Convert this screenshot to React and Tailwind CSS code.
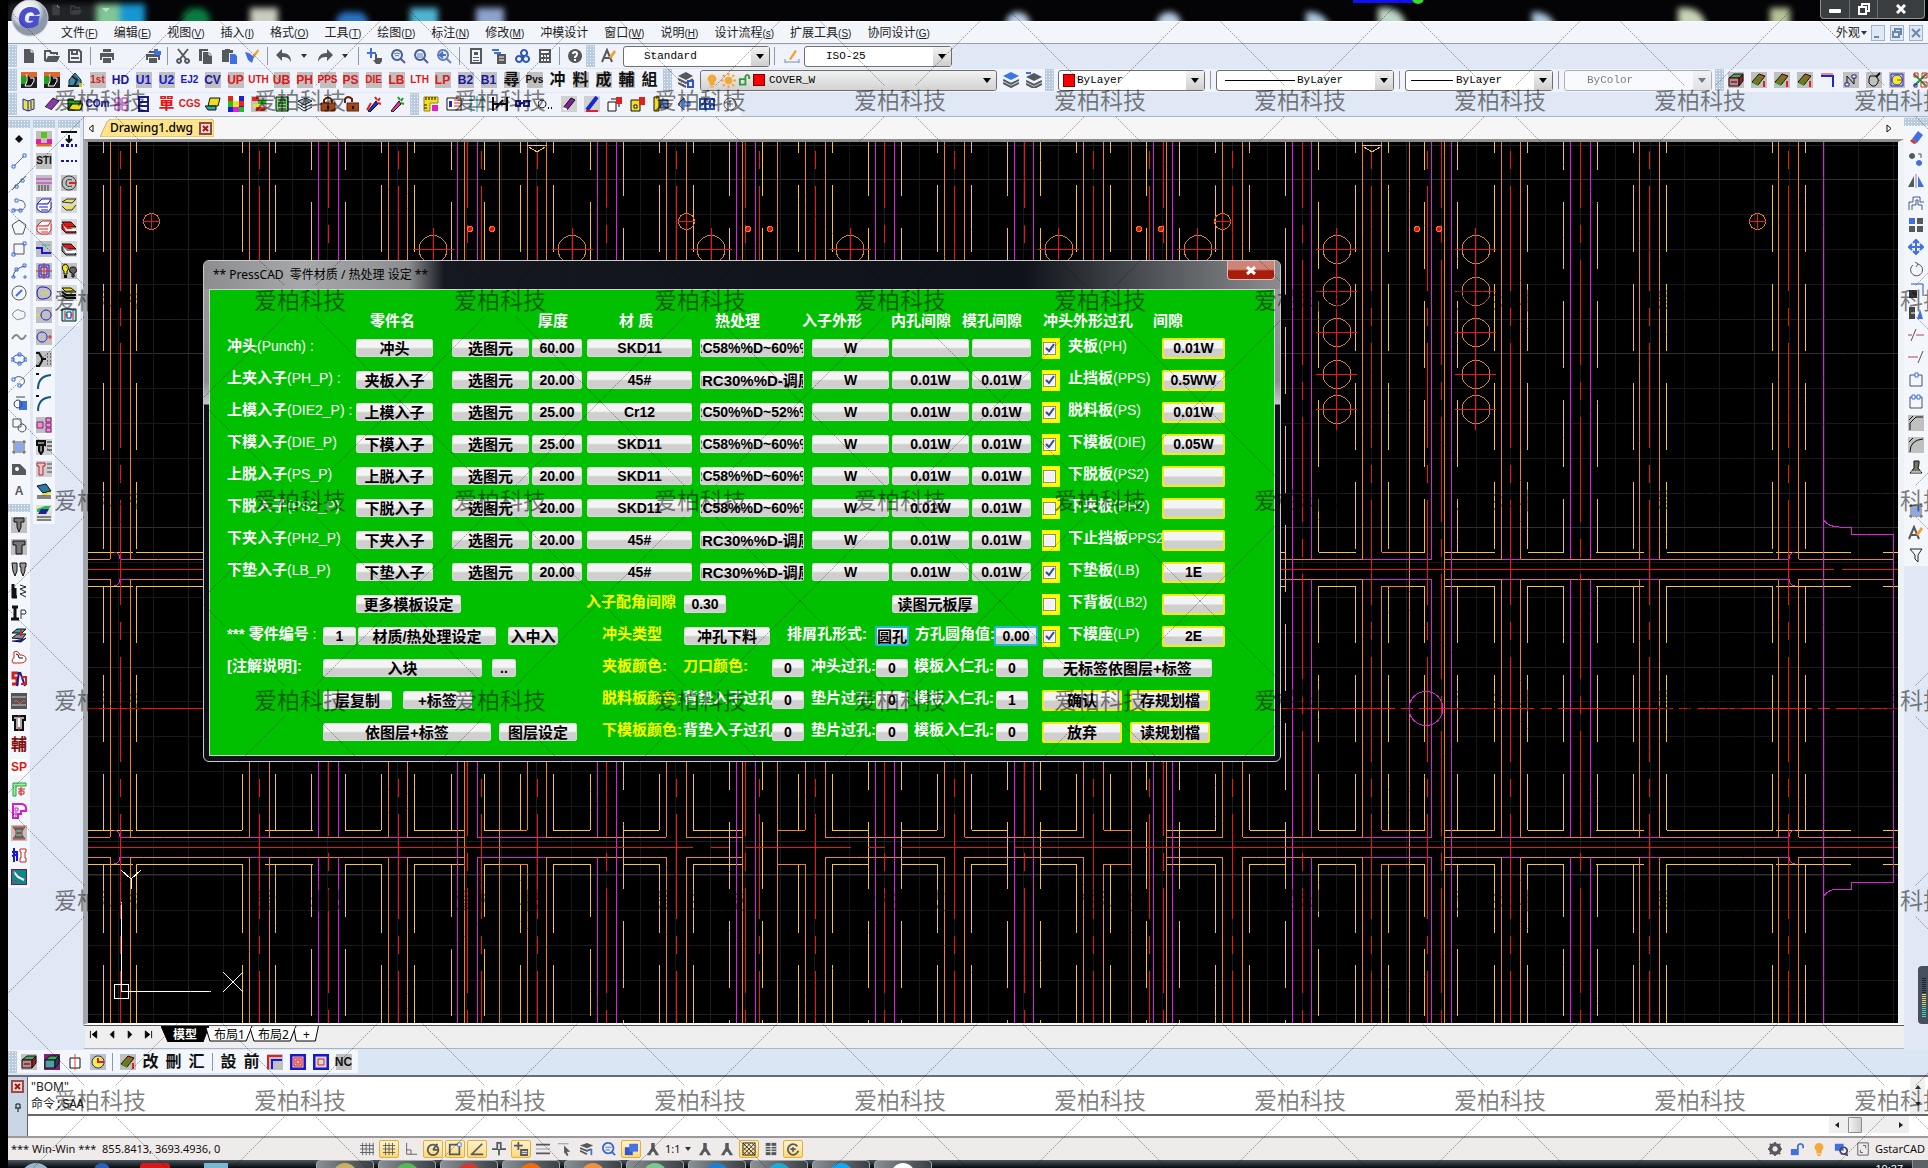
import { useState } from 'react'

/* ---------- icon drawings: 16x16, [background, ...[d, stroke, fill, width]] ---------- */

const G = '#55585c'
const B = '#3f6fe0'

const ICONS = {
  new: [null, ['M3 1h7l3 3v11H3z', null, G], ['M10 1v3h3', '#fff']],
  open: [null, ['M1 13V3h5l1 2h6v2', G, null, 2], ['M1 14l3-6h12l-3 6z', null, G]],
  save: [null, ['M2 2h10l2 2v10H2z', G, null, 2], ['M5 2v4h5V2M4 10h8', G, null, 2]],
  print: [null, ['M4 1h8v3H4zM1 5h14v7h-2V9H3v3H1zM4 10h8v5H4z', null, G]],
  preview: [null, ['M4 3h6v2H4zM1 6h14v6h-2V9H3v3H1zM4 10h8v5H4z', null, G], ['M9 1h4v2h3v4H9z', null, B]],
  cut: [null, ['M3 1l8 10M13 1L5 11', G, null, 2], ['M4 11a2 2 0 1 0 .1 0M12 11a2 2 0 1 0 .1 0', G, null, 2]],
  copy: [null, ['M1 1h9v2H4v10H1z', null, G], ['M5 4h6l3 3v9H5z', null, G], ['M11 4v3h3', '#fff']],
  paste: [null, ['M1 2h3V1h5v1h3v3H8v9H1z', null, G], ['M9 6h5l2 2v8H9z', null, B]],
  brush: [null, ['M8 8l6-7 1 2-5 7z', null, '#f0a030'], ['M1 4l4 1 5 4-2 6-4-3z', null, B]],
  undo: [null, ['M6 1v4c6 0 9 3 9 9-2-4-4-5-9-5v4L0 7z', null, G]],
  redo: [null, ['M10 1v4C4 5 1 8 1 14c2-4 4-5 9-5v4l6-6z', null, G]],
  pan: [null, ['M4 0v10M0 5h9', B, null, 2], ['M8 6h2v4h5v3l-2 3H9l-3-4 2 0z', null, G]],
  zoomIn: [null, ['M7 2a5 5 0 1 0 .1 0M11 11l4 4', '#4a6290', null, 2], ['M4 6q3-2 6 0M5 8q2-1 4 0', B]],
  zoomWin: [null, ['M7 2a5 5 0 1 0 .1 0M11 11l4 4', '#4a6290', null, 2], ['M4 5h6v5H4z', null, '#9db8f0']],
  zoomPrev: [null, ['M7 2a5 5 0 1 0 .1 0M11 11l4 4', '#6a82a8', null, 2], ['M10 7H4l3-3M4 7l3 3', B, null, 2]],
  props: [null, ['M3 1h10v14H3z', G, null, 2], ['M6 4h4v3H6zM5 9h6v1H5zM5 12h6v1H5z', null, G]],
  palette: [null, ['M1 1h7v2H1zM3 4h7v2H3z', null, B], ['M6 6h9v10H6z', null, G], ['M8 9h5M8 12h5', '#fff']],
  xref: [null, ['M10 2a3 3 0 1 0 .1 0M5 8a3 3 0 1 0 .1 0M12 8a3 3 0 1 0 .1 0', '#2a55b0', null, 2]],
  calc: [null, ['M2 1h12v14H2z', null, G], ['M4 3h8v2H4zM4 7h2v2H4zM7 7h2v2H7zM10 7h2v2h-2zM4 11h2v2H4zM7 11h2v2H7zM10 11h2v2h-2z', null, '#fff']],
  help: [null, ['M8 1a7 7 0 1 0 .1 0', null, G], ['M6 6q0-2 2-2t2 2-2 3v1M8 11v2', '#fff', null, 2]],
  textStyle: [null, ['M1 14L6 2l5 12M3 10h6', G, null, 2], ['M8 9l5-7 2 2-5 7z', null, '#f0a030']],
  dimStyle: [null, ['M1 14h14M1 11v4M15 11v4', '#7890b0'], ['M5 11l6-9 2 1-6 9z', null, '#f0a030']],
  layers: [null, ['M0 4l8-4 7 4-7 4z', null, G], ['M0 7l8 4 7-4M0 11l8 4', G, null, 2], ['M10 9h5v6h-5z', '#2d55d0', null, 2]],
  layerBlue: [null, ['M0 4l8-4 8 4-8 4z', null, '#3878e8'], ['M0 8l8 4 8-4M0 11l8 4 8-4', G, null, 2]],
  layerGray: [null, ['M0 5l8-4 8 4-8 4z', null, G], ['M0 9l8 4 8-4M0 12l8 4 8-4', G, null, 2], ['M0 1h5', B, null, 2]],
  press: ['#202020', ['M0 0h16v5H0z', null, '#e0662a'], ['M0 4h5v8H0z', null, '#1fa01f'], ['M6 2v7l-2 5h6l3-5V6H9', '#fff', '#111']],
  house: [null, ['M2 8l6-7 6 7v6H2z', '#222', '#3a8fb0'], ['M1 14h14M5 4l5 4-3 6', '#222', null, 2], ['M12 11h3v4h-3z', null, '#c8c020']],
  book: [null, ['M2 3l5 2 6-2v10l-6 2-5-2z', '#1c1cc8', '#e8e840'], ['M7 5v10M10 5v8', '#1c1cc8']],
  eraser: [null, ['M1 11l8-9 6 3-8 9z', '#222', '#8a3aa8'], ['M1 11l6 3v2l-6-3z', null, '#fff']],
  folder: [null, ['M1 3h5l1 2h7v9H1z', '#111', '#1fa01f'], ['M1 14l4-6h11l-3 6z', '#111', '#e8e020']],
  cells: [null, ['M2 2h5v5H2zM9 2h5v5H9zM2 9h5v5H2zM9 9h5v5H9z', '#b020b0']],
  note: [null, ['M3 1h9v14H3zM3 6h9M3 10h9', '#1c1c90', '#fff', 2]],
  write: [null, ['M5 2h10l-2 8H3z', '#111', '#e8e020'], ['M0 10h11v4H3z', '#111', '#30a8a8']],
  colors: ['#2020d0', ['M0 0h5v5H0zM11 5h5v5h-5z', null, '#f02020'], ['M5 0h6v5H5z', null, '#fff'], ['M0 5h5v6H0zM11 11h5v5h-5z', null, '#20c020'], ['M5 5h6v6H5z', null, '#f0e020'], ['M5 11h6v5H5z', null, '#e020e0']],
  blocks: ['#c0c0c0', ['M1 1h7v4H1z', null, '#f02020'], ['M7 4h8v4H7z', null, '#20c020'], ['M2 8h8v3H2z', null, '#f0e020'], ['M5 11h9v4H5z', null, '#e03030']],
  sheet: [null, ['M2 1h12v14H2z', '#111', '#80e080'], ['M4 4h8M4 7h8M4 10h8M4 13h8', '#111']],
  stackG: [null, ['M1 5l8-3 6 3-8 4z', '#222', '#a0b8d0'], ['M1 8l6 4 8-4M1 11l6 4 8-4', '#222', null]],
  lock: [null, ['M4 8V4q4-5 8 0v4', '#5a2008', null, 2], ['M1 7h14v8H1z', '#5a2008', '#a04818'], ['M7 10h2v3H7z', null, '#111']],
  unlock: [null, ['M2 7V3q3-4 7 0v3', '#5a2008', null, 2], ['M4 7h12v8H4z', '#5a2008', '#a04818'], ['M9 10h2v3H9z', null, '#111']],
  wand: [null, ['M2 15l8-10 2 3-8 8z', '#111', '#2828e0'], ['M9 1l2 3M14 2l-2 3M15 8l-3-1M1 14l4-7', '#e02020', null, 2]],
  wandR: [null, ['M2 15l8-10 2 3-8 8z', '#111', '#f030a0'], ['M9 1l2 3M14 2l-2 3M15 8l-3-1', '#20a020', null, 2]],
  ruler: [null, ['M1 1h14v6H7v8H1z', '#a08010', '#f0e020'], ['M3 1v3M6 1v3M9 1v3M12 1v3M1 9h3M1 12h3', '#111'], ['M9 9h6v6H9z', null, '#e020c0']],
  panel: [null, ['M1 2h14v12H1z', '#111', '#fff'], ['M3 5h3v6H3z', null, '#2828c0'], ['M8 4h6M8 7h6M8 10h6', '#e02020']],
  dots: [null, ['M2 0v16M8 0v16M14 0v16', '#20a0a0'], ['M0 4h16M0 11h16', '#444']],
  meas: [null, ['M1 1v14M15 1v14M1 8h14M4 12l7-8', '#111', null, 2]],
  chain: [null, ['M1 5h4v5H1zM9 5h5v5H9zM5 7h4', '#1c1c90', null, 2]],
  circ: [null, ['M4 4a4 4 0 1 0 .1 0', '#111'], ['M10 12h1M13 12h1', '#111', null, 2]],
  eraseP: ['#d0d0d0', ['M2 12l8-10 4 2-8 10z', '#111', '#8020a0'], ['M2 12l4 2', '#fff', null, 2]],
  pen: ['#d0d0d0', ['M3 14L13 1', '#1828d0', null, 4], ['M2 15h12', '#e02020', null, 2]],
  cubes: [null, ['M1 6h8v9H1z', '#111', '#fff'], ['M4 3h8v8', '#111'], ['M9 1h6v7H9z', null, '#e02020']],
  cubesY: [null, ['M1 4h9v11H1z', '#111', '#f0e020'], ['M9 1h6v8H9z', null, '#e02020'], ['M4 9h3v3H4z', '#111', '#fff']],
  panelY: [null, ['M1 1h5v14H1z', '#111', '#f0e020'], ['M7 4h8v8H7z', '#111', '#7090d0']],
  arrowL: [null, ['M8 2L2 8l6 6V2M8 6h6v4H8', '#3050b0', '#90b8f0']],
  tableB: [null, ['M1 3h14v10H1zM6 3v10M11 3v10M1 8h14', '#3050b0', null, 2]],
  ring: [null, ['M8 2a6 6 0 1 0 .1 0M8 5v6M5 8h6', '#555']],
  slab: ['#c0c0c0', ['M1 6l5-4h9l-4 4z', '#111', '#58a068'], ['M1 6h10v8H1z', '#111', '#c88088'], ['M11 6l4-4v7l-4 5z', '#111', '#902028'], ['M3 10h6', '#111']],
  slabP: ['#802080', ['M1 6l5-4h9l-4 4z', '#111', '#30b050'], ['M1 6h10v8H1z', '#111', '#50a0a0'], ['M11 6l4-4v7l-4 5z', '#111', '#204060']],
  leaf: ['#c0c0c0', ['M1 10l7-8 6 2-7 9z', '#111', '#a06020'], ['M2 10l5 3M5 6l5 3', '#20a020', null, 2], ['M13 9v6', '#e02020', null, 2]],
  hook: [null, ['M1 4h12v11', '#1828d0', null, 2], ['M1 2h12', '#e02020']],
  nArr: ['#c0c0c0', ['M4 12V4M11 12V4M4 4l7 8', '#111'], ['M2 11h4v3H2zM9 3h4v3H9z', '#1c1c90', '#fff']],
  sqCirc: ['#c0c0c0', ['M4 4h6q4 4 1 8l-2 2H6l-3-3V7z', '#111'], ['M10 5l4-4', '#111', null, 2]],
  ringY: ['#c0c0c0', ['M2 2h12v12H2z', '#2828c0'], ['M8 3a5 5 0 1 0 .1 0', '#2828c0', '#f0f020'], ['M8 8h4', '#e02020']],
  net: [null, ['M2 2l12 12M14 2L2 14', '#20a040', null, 2], ['M2 1h4v4H2zM10 1h5v5h-5zM9 10h6v5H9z', '#e02020'], ['M2 12h3v3H2z', '#2828c0']],

  point: [null, ['M8 4l4 4-4 4-4-4z', null, '#111']],
  line: [null, ['M3 13L13 3', '#666'], ['M1 12h3v3H1zM12 1h3v3h-3z', B]],
  ray: [null, ['M1 15L15 1', '#666'], ['M4 10h3v3H4zM10 4h3v3h-3z', B]],
  pline: [null, ['M2 13h8q5-1 4-6-1-4-6-4', '#666'], ['M1 12h3v3H1zM8 12h3v3H8zM4 2h3v3H4z', B]],
  pentagon: [null, ['M8 1l7 5-3 9H4L1 6z', '#555']],
  rect: [null, ['M3 3h10v10H3z', '#555'], ['M1 12h3v3H1zM12 1h3v3h-3z', B]],
  arc: [null, ['M2 14Q3 5 14 3', '#555'], ['M1 13h3v2H1zM13 13h2v2h-2zM12 1h3v3h-3zM4 5h3v3H4z', B]],
  circle: [null, ['M8 1a7 7 0 1 0 .1 0', '#555'], ['M5 11l6-6', B, null, 2]],
  cloud: [null, ['M4 4q3-3 6 0 5 0 4 4 0 4-5 4-3 2-5-1-4-2-2-5z', '#888']],
  spline: [null, ['M1 10q4-7 7-2t7-2', '#888', null, 2]],
  ellipse: [null, ['M8 4q6 0 6 4t-6 4-6-4 6-4z', '#2b50c0'], ['M7 2h3v3H7zM7 11h3v3H7zM0 7h3v3H0zM13 7h3v3h-3z', B]],
  earc: [null, ['M3 6q4-5 10 0 2 5-4 7', '#555'], ['M1 5h3v3H1zM7 11h3v3H7z', B]],
  block: [null, ['M8 6h8v9H8z', null, B], ['M7 5a4 4 0 1 0 .1 0M5 2h9', '#345']],
  mkblk: [null, ['M2 2h8v8H2z', '#555'], ['M11 7a4 4 0 1 0 .1 0', '#555']],
  hatch: [null, ['M1 3h14M1 13h14M3 1v14M13 1v14', '#555'], ['M4 4h8v8H4z', null, '#8aa8f0']],
  region: [null, ['M1 3h8l6 6v5H1z', null, G], ['M6 6a2 2 0 1 0 .1 0', null, '#fff']],

  gate: ['#c0c0c0', ['M0 8h5v4h6V8h5v5H0z', null, '#e020a0'], ['M5 1h6v6H5z', null, '#60c020'], ['M1 14h14', '#e07020', null, 2]],
  comb: ['#c0c0c0', ['M0 4h16M0 8h16', '#d020d0'], ['M3 10v6M6 10v6M9 10v6M12 10v6', '#333']],
  stackB: ['#c0c0c0', ['M1 7l5-5h9l-3 5zM1 7v5l4 3h7l3-4V5', '#1818d0', '#fff'], ['M3 10h9M5 13h7', '#1818d0']],
  stackR: ['#c0c0c0', ['M1 7l5-5h9l-3 5zM1 7v5l4 3h7l3-4V5', '#e02020', '#fff'], ['M3 10h9M5 13h7', '#e02020']],
  step: ['#c0c0c0', ['M0 7h6v5h9', '#1818d0', null, 2], ['M6 4h8', '#20c0c0']],
  gridR: ['#c0c0c0', ['M3 2h10v12H3zM5 4h6v8H5z', '#1818d0'], ['M8 0v16M0 8h16', '#e02020']],
  oval: ['#c0c0c0', ['M8 2q7 1 7 6t-7 6-7-6 7-6z', '#1818d0'], ['M5 8h8', '#e8e020']],
  circB: ['#c0c0c0', ['M10 3a5 5 0 1 0 .1 0', '#1818d0'], ['M1 8h3', '#e8e020', null, 2]],
  circR: ['#c0c0c0', ['M6 3a5 5 0 1 0 .1 0', '#1818d0'], ['M12 8h4M14 6v4', '#e02020']],
  fork: ['#c0c0c0', ['M0 2h3l3 5v3l-3 5H0M6 8h4', '#111', null, 2], ['M11 3h1M14 3h1M11 6h1M14 6h1M11 10h1M14 10h1M11 13h1M14 13h1', '#111']],
  curve: [null, ['M2 16Q2 3 15 2', '#1a5a78', null, 2], ['M0 1h3', '#111', null, 2]],
  tree: ['#c0c0c0', ['M1 5h6v6H1zM10 1h5v4h-5zM10 6h5v4h-5zM10 11h5v4h-5z', '#802080', '#f090c0']],
  screw: ['#d0d0d0', ['M1 2h8v4H1zM3 6v6l2 3 2-3V6', '#111', '#888', 2], ['M11 3h5M11 7h5M11 11h5', '#111']],
  screwR: ['#d0d0d0', ['M1 2h8v3H7v9H3V5H1z', '#a03030', '#f0c0c0'], ['M11 3h5M11 7h5M11 11h5', '#444']],
  sheetB: [null, ['M1 3l9-2 5 7-8 2z', '#111', '#2878a8'], ['M6 12l9-2', '#e8e020', null, 2], ['M1 13h14M1 15h14', '#111']],
  sheetG: ['#e0e0e0', ['M1 4l8-3h6l-5 6H1z', null, '#20c040'], ['M5 4h8l-3 5H2z', null, '#2020a0'], ['M1 12h14M1 15h14', '#222']],

  down: [null, ['M0 1h16', '#111', null, 2], ['M8 4v6M5 8l3 3 3-3', '#111', null, 2], ['M0 13h3v3H0zM5 13h3v3H5zM10 13h2v3h-2zM14 13h2v3h-2z', null, '#1818a0']],
  dash: [null, ['M0 8h3M5 8h3M10 8h2M14 8h2', '#1818a0', null, 2]],
  cc: ['#c0c0c0', ['M8 1a7 7 0 1 0 .1 0M11 5q-6-2-6 3t6 3', '#333'], ['M8 8h7', '#e02020', null, 2]],
  layY: ['#d8d8d8', ['M1 5l5-3h9l-4 4z', '#333', '#e8e060'], ['M1 9l4 4h6l4-5', '#333', '#e8e060']],
  layR: ['#d8d8d8', ['M1 3h9l5 5H5z', '#111', '#e01818'], ['M1 5v5l4 4h10l-1-3', '#111', '#e01818'], ['M2 6l4 4h9v2H5z', null, '#fff']],
  layRG: ['#d8d8d8', ['M1 3h9l5 5H5z', '#111', '#e01818'], ['M1 5v5l4 4h10l-1-3', '#111', '#888'], ['M2 6l4 4h9v2H5z', null, '#fff']],
  bulbs: ['#c0c0c0', ['M4 1a4 4 0 0 1 2 7v3H3V8a4 4 0 0 1 1-7z', '#111', '#f0f020'], ['M12 4a3 3 0 0 1 1 6v4h-2v-4a3 3 0 0 1 1-6z', '#111', '#666'], ['M3 12h3v3H3z', null, '#111']],
  layYK: ['#d8d8d8', ['M1 3h9l5 4H5z', '#111', '#e8e020'], ['M1 7l4 3h10M1 10l4 3h10', '#111', null, 2]],
  frame: [null, ['M1 2h14v12H1z', '#111', '#a0f0f0'], ['M4 4v9M12 4v9M4 8h8', '#e02020'], ['M6 5h4v6H6z', '#1818a0', '#fff']],

  pin1: ['#c0c0c0', ['M3 1h10v4h-3v5l-2 5-2-5V5H3z', '#111', '#777']],
  pin2: ['#c0c0c0', ['M2 2h12v4h-3v9H5V6H2z', '#111', '#777']],
  pins: [null, ['M1 2h5v8l-2 5-2-5zM9 2h6v4h-1v4l-2 5-2-5V6H9z', '#111', '#999']],
  spring: [null, ['M2 1v14M4 5v9M1 14h5', '#111', null, 3], ['M9 2l6 2-6 2 6 3-6 2 6 3', '#222']],
  punch: [null, ['M1 2h6M4 2v12M0 14h8', '#111', null, 3], ['M10 14V5h4q2 3 0 4h-4', '#333']],
  plates: [null, ['M1 6l5-4h9l-4 4z', '#111', '#30a0a0'], ['M1 11l5-4h9l-4 5z', '#111', '#889'], ['M1 14l9 1 5-4', '#111', '#2020a0'], ['M10 3v6', '#e02020', null, 2]],
  shoe: [null, ['M3 3q4-2 6 3 6 0 6 4 0 4-6 4H2q-2-4 1-5z', '#d02020', '#fff'], ['M5 5q3 0 3 4h4', '#111']],
  sb: [null, ['M7 2H2v5h4v6H1', '#d02020', null, 3], ['M8 1l-2 14M9 1l5 14', '#1c1c90', null, 2], ['M10 6h5v7h-5', '#d02020', null, 2]],
  platen: ['#555', ['M1 4h14M1 12h14', '#ccc'], ['M3 9q2-3 4 0t4 0 3-1', '#e06060']],
  bush: [null, ['M2 1h12v4h-2v10H4V5H2z', '#111', '#aaa', 2], ['M8 0v16', '#e02020'], ['M7 3h2v9H7z', null, '#fff']],
  cornerG: [null, ['M2 15V2h13v3H5v10z', '#20a040', '#a0f0a0'], ['M7 8h7M8 10h5v3H8zM10 6v9', '#d02020']],
  cornerM: [null, ['M2 1h9q4 1 4 4v3h-5v3H7v4H2z', '#d020d0', null, 2], ['M4 5h3v3H4zM4 10h2v2H4z', '#d020d0']],
  spool: ['#c0c0c0', ['M2 2h12l-3 4v4l3 4H2l3-4V6z', '#d02020', '#70a090'], ['M4 4h8M4 12h8M6 8h4', '#333']],
  split: [null, ['M3 1v14M1 5h6M1 9l6-2M6 6v8', '#1818d0', null, 2], ['M9 2h6v3h-1v6h1v4H9v-4h1V5H9z', '#d02020', '#fff']],
  teal: ['#108888', ['M0 0h16v16H0z', '#602060', null, 2], ['M3 3l4 5 6 3', '#fff', null, 2], ['M2 12h4M2 4h2', '#d02060']],

  rErase: [null, ['M4 10l6-8 5 4-6 8z', null, B], ['M4 10l5 4-3 1-4-3z', null, '#e03030']],
  rCopy: [null, ['M4 2a3 3 0 1 0 .1 0', null, G], ['M11 9a3 3 0 1 0 .1 0', null, B], ['M10 3h3v4', '#555']],
  rMirror: [null, ['M6 3v11H0z', null, G], ['M10 3v11h6z', null, B], ['M8 1v14', '#888']],
  rOffset: [null, ['M1 15V7h4V2h7v5h4', '#445c88'], ['M4 15v-5h4V5h2v5h4v5', '#445c88']],
  rArray: [null, ['M1 1h6v6H1z', null, B], ['M9 1h6v6H9zM1 9h6v6H1zM9 9h6v6H9z', null, G]],
  rMove: [null, ['M8 1v14M1 8h14M5 4l3-3 3 3M5 12l3 3 3-3M4 5L1 8l3 3M12 5l3 3-3 3', B, null, 2]],
  rRotate: [null, ['M10 3a6 6 0 1 1-5 1M7 1l3 2-2 3', '#556']],
  rScale: [null, ['M1 7h8v8H1z', null, '#333'], ['M3 1h12v12', '#2b50c0']],
  rStretch: [null, ['M1 2h6v12H1z', null, '#444'], ['M9 14l3-10 3 10z', null, B], ['M3 8h8', '#fff']],
  rTrim: [null, ['M3 14L8 2', '#555'], ['M0 8h4M8 8h8', '#c04040']],
  rExtend: [null, ['M10 14L15 2', '#555'], ['M0 8h10', '#c04040']],
  rBreak: [null, ['M2 4h12v11H2z', '#456'], ['M7 2h3v4H7z', B, '#fff']],
  rBreak2: [null, ['M2 4h12v11H2z', '#456'], ['M4 2h3v4H4zM9 2h3v4H9z', B, '#fff']],
  rChamfer: ['#c0c0c0', ['M2 15V8l6-6h7', '#111'], ['M1 5l4-4', '#111']],
  rFillet: ['#c0c0c0', ['M2 15Q2 3 15 2', '#111'], ['M1 5l4-4', '#111']],
  rBomb: [null, ['M6 2h5v3l-1 4 4 5H2l4-5z', '#111', '#776'], ['M3 13h10', '#fff']],
  rFilter: [null, ['M2 2h12l-4 6v7l-3-3V8z', '#222']],

  sGrid: [null, ['M3 1v14M7 1v14M11 1v14M15 1v14M0 4h16M0 8h16M0 12h16', G]],
  sGrid2: [null, ['M4 1v14M8 1v14M12 1v14M1 4h14M1 8h14M1 12h14', G]],
  sOrtho: [null, ['M3 1v13h12M3 9h5v5', G]],
  sPolar: [null, ['M8 3a6 6 0 1 0 .1 0M8 9h7M8 9l5-7', G, null, 2]],
  sSnap: [null, ['M2 3h11v11H2z', G, null, 2], ['M11 1h4v4h-4z', B, '#fff']],
  sTrack: [null, ['M1 14h14M2 14L14 2', G, null, 2]],
  sUcs: [null, ['M0 8h6V1h4v7h6M8 8v7', G, null, 2]],
  sDyn: [null, ['M5 0v9M0 4h10', G, null, 2], ['M7 8h9v8H7z', null, G], ['M9 11h6M9 13h6', '#fff']],
  sLw: [null, ['M0 3h16M0 13h16', G, null, 2], ['M0 8h16', '#88a']],
  sSel: [null, ['M0 2h12', '#88a'], ['M7 4l7 7h-4l2 4-2 1-2-4-1 2z', null, G]],
  sLay: [null, ['M0 4l8-3 7 3-7 3z', null, G], ['M0 7l8 3 5-2M0 10l8 4', G, null, 2], ['M13 8v7', B, null, 2]],
  sZoom: [null, ['M7 1a6 6 0 1 0 .1 0M11 11l4 4', '#3b66c8', null, 2], ['M4 6h7M4 9h5', '#3b66c8']],
  sWin: [null, ['M1 6h9v9H1z', null, '#3058d0'], ['M6 2h10v9H6z', null, '#4a72e8']],
  sAnn: [null, ['M6 1h4v6l5 8h-4l-2-4H7l-2 4H1l5-8z', null, G]],
  sTable: [null, ['M2 1h12v14H2z', null, G], ['M2 5h12M2 8h12M2 11h12M8 1v14', '#fff']],
  sHatch: [null, ['M1 1h14v14H1z', '#333'], ['M1 1l14 14M6 1l9 9M11 1l4 4M1 6l9 9M1 11l4 4M15 1L1 15M10 1l-9 9M5 1L1 5M15 6l-9 9M15 11l-4 4', '#333']],
  sCycle: [null, ['M13 5a6 6 0 1 0 1 5M8 6v5M5 8h6', G, null, 2]],
  gear: [null, ['M8 3a5 5 0 1 0 .1 0', G, null, 4], ['M8 0v3M8 13v3M0 8h3M13 8h3M2 2l2 2M12 12l2 2M2 14l2-2M12 4l2-2', G, null, 2]],
  sLock: [null, ['M1 8h9v7H1z', null, B], ['M9 8V4q3-4 6 0v3', B, null, 2]],
  sBulb: [null, ['M8 1a5 5 0 0 1 3 9v3H5v-3a5 5 0 0 1 3-9z', null, '#f5a83a'], ['M6 14h4v2H6z', null, '#f5a83a']],
  sChip: [null, ['M1 2h10v8H1z', null, B], ['M11 6a4 4 0 1 0 .1 0M13 13l3 3', '#446', null, 2]],
  sFull: [null, ['M2 1h12v14H2z', G], ['M5 9v3h3M11 7V4H8', G]],

  boxLine: [null, ['M3 4h10v10H3z', '#111', '#fff'], ['M8 0v16', '#e04040']],
  target: ['#c0c0c0', ['M8 2a6 6 0 1 0 .1 0', '#1818d0', '#f0f040'], ['M8 8h6M8 4v5', '#e02020', null, 2]],
  elbow: ['#c0c0c0', ['M1 15V2h14', '#e02020', null, 2], ['M5 15V6h10', '#1818d0', null, 2]],
  nest: ['#f0c0c0', ['M1 1h14v14H1z', '#1818d0', null, 3], ['M4 4h8v8H4zM6 6h4v4H6z', '#e02020']],
  nest1: ['#d8d8d8', ['M1 1h14v14H1z', '#1818d0', null, 3], ['M5 5h6v6H5z', '#e02020']],
}

const R = '#e01818'
const N = '#1818a0'
const K = '#111'
const GR = '#c0c0c0'

// text tools: [label, colour, background]
const TOOL_ROW_2 = [
  'press', 'press', 'house',
  ['1st', R, GR], ['HD', N], ['U1', '#1818d0', GR], ['U2', '#1818d0', GR], ['EJ2', '#1818d0'], ['CV', N, GR],
  ['UP', R, GR], ['UTH', R], ['UB', R, GR], ['PH', R, GR], ['PPS', R, GR], ['PS', R, GR], ['DIE', R, GR],
  ['LB', R, GR], ['LTH', R], ['LP', R, GR], ['B2', N, GR], ['B1', N, GR], ['尋', K, GR], ['Pvs', K, GR],
  ['冲', K], ['料', K, GR], ['成', K, GR], ['輔', K, GR], ['組', K],
]

const TOOL_ROW_3 = [
  'book', 'eraser', 'folder', ['COm', N], 'cells', 'note', ['單', R], ['CGS', R], 'write', 'colors', 'blocks',
  'sheet', 'stackG', 'lock', 'unlock', 'wand', 'wandR',
]
const TOOL_ROW_3B = [
  'ruler', 'panel', 'dots', 'meas', 'chain', 'circ', 'eraseP', 'pen', 'cubes', 'cubesY', 'panelY', 'arrowL', 'tableB', 'ring',
]
const TOOL_PLATES = ['slab', 'leaf', 'leaf', 'leaf', 'hook', 'nArr', 'sqCirc', 'ringY', 'net']

const DRAW_TOOLS = [
  'point', 'line', 'ray', 'pline', 'pentagon', 'rect', 'arc', 'circle', 'cloud', 'spline', 'ellipse', 'earc',
  'block', 'mkblk', 'hatch', 'region', ['A', G],
]
const PIN_TOOLS = [
  'pin1', 'pin2', 'pins', 'spring', 'punch', 'plates', 'shoe', 'sb', 'platen', 'bush', ['輔', '#801010'], ['SP', R, '#fff'],
  'cornerG', 'cornerM', 'spool', 'split', 'teal',
]
const DIE_TOOLS = [
  'gate', ['STI', K, GR], 'comb', 'stackB', 'stackR', 'step', 'gridR', 'oval', 'circB', 'circR', 'fork', 'curve',
  'curve', 'tree', 'screw', 'screwR', 'sheetB', 'sheetG',
]
const LAYER_TOOLS = ['down', 'dash', 'cc', 'layY', 'layR', 'layRG', 'bulbs', 'layYK', 'frame']
const MODIFY_TOOLS = [
  'rErase', 'rCopy', 'rMirror', 'rOffset', 'rArray', 'rMove', 'rRotate', 'rScale', 'rStretch', 'rTrim', 'rExtend',
  'rBreak', 'rBreak2', 'rChamfer', 'rFillet', 'rBomb', null, 'hatch', 'textStyle', 'rFilter',
]

const MENUS = [
  ['文件', 'F'], ['编辑', 'E'], ['视图', 'V'], ['插入', 'I'], ['格式', 'O'], ['工具', 'T'], ['绘图', 'D'], ['标注', 'N'],
  ['修改', 'M'], ['冲模设计', ''], ['窗口', 'W'], ['说明', 'H'], ['设计流程', 's'], ['扩展工具', 'S'], ['协同设计', 'G'],
]

const hasCjk = s => /[\u3400-\u9fff]/.test(s)

function Icon({ name, className = 'h-4 w-4' }) {
  const [bg, ...shapes] = ICONS[name]
  return (
    <svg className={`${className} shrink-0`} viewBox="0 0 16 16" aria-hidden="true">
      {bg && <rect width="16" height="16" fill={bg} />}
      {shapes.map(([d, stroke, fill, width], i) => (
        <path key={i} d={d} stroke={stroke ?? 'none'} fill={fill ?? 'none'} strokeWidth={width ?? 1} />
      ))}
    </svg>
  )
}

function Tool({ tool, className = 'h-[22px] w-[23px]' }) {
  if (!tool) return <span className={className} />
  if (typeof tool === 'string') {
    return (
      <button aria-label={tool} className={`${className} flex shrink-0 items-center justify-center`}>
        <Icon name={tool} />
      </button>
    )
  }
  const [label, color, bg] = tool
  const size = hasCjk(label) ? 'text-[16px]' : label.length > 2 ? 'text-[10px]' : 'text-[12px]'
  return (
    <button className={`${className} flex shrink-0 items-center justify-center`}>
      <span
        className={`flex h-4 w-4 items-center justify-center whitespace-nowrap font-bold leading-none ${size}`}
        style={{ color, backgroundColor: bg }}
      >
        {label}
      </span>
    </button>
  )
}

const DOTS = 'bg-[#b9cbdf] bg-[radial-gradient(#f4f8fd_1px,transparent_1px)] bg-[size:3px_3px]'

function GripV() {
  return <div className={`h-[22px] w-[9px] shrink-0 ${DOTS}`} />
}

function GripH({ className = '' }) {
  return <div className={`h-2 w-full shrink-0 ${DOTS} ${className}`} />
}

function Sep({ className = 'mx-[3px]' }) {
  return <div className={`h-[18px] w-px shrink-0 bg-[#8c98a8] ${className}`} />
}

function Caret() {
  return <span className="h-0 w-0 border-x-[3px] border-t-[4px] border-x-transparent border-t-[#333]" />
}

function Combo({ label, value, className, pad, children, disabled, wide }) {
  return (
    <div className={`relative h-[21px] shrink-0 rounded-[3px] border border-[#6e6e6e] bg-white ${disabled ? 'opacity-50' : ''} ${className}`}>
      <select
        aria-label={label}
        disabled={disabled}
        className={`block h-[19px] w-full appearance-none rounded-[3px] py-0 font-['Liberation_Mono',monospace] text-[11px] leading-[17px] text-black ${pad} ${wide ? 'bg-linear-to-b from-[#f2f2f2] to-[#d2d2d2]' : 'bg-transparent'}`}
      >
        <option>{value}</option>
      </select>
      <span className={`pointer-events-none absolute inset-y-0 right-0 flex w-[18px] items-center justify-center ${wide ? '' : 'bg-linear-to-b from-[#f2f2f2] to-[#cfcfcf]'}`}>
        <span className="h-0 w-0 border-x-4 border-t-[5px] border-x-transparent border-t-black" />
      </span>
      {children}
    </div>
  )
}

/* ---------- window chrome ---------- */

function TitleBar() {
  return (
    <header className="relative flex h-[21px] shrink-0 items-start justify-end overflow-hidden bg-[#040406]">
      <div className="absolute inset-0 opacity-90 blur-[3px]">
        <span className="absolute top-1 left-0 h-5 w-[90px] bg-[#26292c]" />
        <span className="absolute top-1 left-[88px] h-6 w-[25px] bg-[#8fdca6]" />
        <span className="absolute top-1 left-[112px] h-6 w-[25px] bg-[#18a8ea]" />
        <span className="absolute top-2 left-[174px] h-6 w-7 rounded-full bg-[#0c8a48]" />
        <span className="absolute top-2 left-[242px] h-5 w-7 bg-[#dfe3d4]" />
        <span className="absolute top-3 left-[328px] h-5 w-8 rounded-full bg-[#2f7fd8]" />
        <span className="absolute top-2 left-[402px] h-5 w-7 bg-[#58c8e8]" />
        <span className="absolute top-2 left-[468px] h-5 w-7 bg-[#9db4e4]" />
        <span className="absolute top-3 left-[998px] h-5 w-6 rounded-t-full bg-[#cfe6ff]" />
        <span className="absolute top-3 left-[1149px] h-5 w-6 rounded-t-full bg-[#cfe6ff]" />
        <span className="absolute top-3 left-[1298px] h-5 w-6 rounded-tr-full bg-[#bfe0fa]" />
        <span className="absolute top-2 left-[1370px] h-5 w-7 rounded-tr-full bg-[#d4eedd]" />
        <span className="absolute top-3 left-[1524px] h-5 w-6 rounded-tr-full bg-[#bfe0fa]" />
        <span className="absolute top-2 left-[1670px] h-5 w-7 rounded-tr-full bg-[#dcecca]" />
        <span className="absolute top-2 left-[1762px] h-5 w-5 bg-[#c9d8a8]" />
      </div>
      <span className="absolute top-0 left-[1345px] h-[3px] w-[60px] bg-[#1010f0]" />
      <span className="absolute -top-2 left-[1404px] h-3 w-3 rounded-full bg-[#38d828]" />
      <div className="absolute top-1 left-[42px] flex items-center gap-2 opacity-50">
        <Icon name="new" className="h-3 w-3" />
        <Icon name="open" className="h-3 w-3" />
        <span className="ml-3 h-0 w-0 border-x-4 border-t-4 border-x-transparent border-t-white" />
      </div>
      <div className="relative mr-[3px] flex h-[19px] rounded-b border border-t-0 border-[#8d9094] bg-[#3a3d40] text-[11px] font-bold leading-none text-white">
        <button aria-label="最小化" className="flex w-[29px] items-end justify-center border-r border-[#6b6e72] pb-[5px]">
          <span className="h-[4px] w-3 rounded-[1px] bg-white" />
        </button>
        <button aria-label="还原" className="flex w-[28px] items-center justify-center border-r border-[#6b6e72]">
          <svg className="h-3 w-3" viewBox="0 0 12 12" fill="none" stroke="#fff" strokeWidth="2">
            <path d="M4 3V1h7v7H9M1 4h7v7H1z" />
          </svg>
        </button>
        <button aria-label="关闭" className="flex w-[46px] items-center justify-center">
          <svg className="h-[10px] w-[10px]" viewBox="0 0 10 10" stroke="#fff" strokeWidth="3">
            <path d="M1 1l8 8M9 1L1 9" />
          </svg>
        </button>
      </div>
    </header>
  )
}

function Logo() {
  return (
    <svg className="absolute top-0 left-[11px] z-10 h-[38px] w-[38px]" viewBox="0 0 38 38">
      <defs>
        <radialGradient id="orb" cx="40%" cy="30%">
          <stop offset="0" stopColor="#fff" />
          <stop offset="0.7" stopColor="#dfe3ea" />
          <stop offset="1" stopColor="#8e98a8" />
        </radialGradient>
      </defs>
      <circle cx="19" cy="18" r="18" fill="url(#orb)" stroke="#c8ccd4" />
      <text x="18" y="27" textAnchor="middle" fontFamily="Liberation Sans" fontWeight="bold" fontStyle="italic" fontSize="27" fill="#4a4ecb" stroke="#4a4ecb" strokeWidth="2">G</text>
    </svg>
  )
}

function MenuBar() {
  return (
    <nav className="flex h-[23px] shrink-0 items-center border-y border-b-[#9aa0a8] border-t-white bg-[#f2f5fa] pl-[53px] text-[12px] text-[#222]">
      <div className="flex min-w-0 flex-1 gap-4 whitespace-nowrap">
        {MENUS.map(([name, key]) => (
          <button key={name}>
            {name}
            {key && <span className="text-[10px]">(<u>{key}</u>)</span>}
          </button>
        ))}
      </div>
      <button className="mr-1 flex items-center gap-px">外观<Caret /></button>
      {['M2 10h5', 'M4 4V2h6v5H8M2 5h6v5H2z', 'M2 2l8 8M10 2l-8 8'].map(d => (
        <button key={d} aria-label="窗口" className="mr-[5px] flex h-4 w-[14px] items-center justify-center border border-[#9fb4cc] bg-[#dde9f6]">
          <svg className="h-3 w-3" viewBox="0 0 12 12" fill="none" stroke="#6d87a5" strokeWidth="2"><path d={d} /></svg>
        </button>
      ))}
    </nav>
  )
}

function Toolbars() {
  return (
    <div className="shrink-0 border-b border-[#a9b4c2] bg-[#dfe8f4]">
      <div className="flex h-6 items-center">
        <div className="flex h-[23px] items-center bg-[#f0f4fa]">
          <GripV />
          <Tool tool="new" /><Tool tool="open" /><Tool tool="save" />
          <Sep className="mx-[4px]" />
          <Tool tool="print" /><Tool /><Tool tool="preview" />
          <Sep />
          <Tool tool="cut" /><Tool tool="copy" /><Tool tool="paste" /><Tool tool="brush" />
          <Sep className="mx-[4px]" />
          <Tool tool="undo" />
          <span className="flex w-[18px] justify-center"><Caret /></span>
          <Tool tool="redo" />
          <span className="flex w-[18px] justify-center"><Caret /></span>
          <Sep className="mx-[4px]" />
          <Tool tool="pan" /><Tool tool="zoomIn" /><Tool tool="zoomWin" /><Tool tool="zoomPrev" />
          <Sep className="mx-[4px]" />
          <Tool tool="props" /><Tool tool="palette" /><Tool tool="xref" /><Tool tool="calc" />
          <Sep />
          <Tool tool="help" />
        </div>
        <div className="flex h-[23px] items-center bg-[#f0f4fa]">
          <GripV />
          <Tool tool="textStyle" className="h-[22px] w-[28px]" />
          <Combo label="文字样式" value="Standard" className="w-[147px]" pad="pl-[20px]" />
          <Sep className="mx-[4px]" />
          <Tool tool="dimStyle" className="h-[22px] w-[25px]" />
          <Combo label="标注样式" value="ISO-25" className="w-[148px]" pad="pl-[21px]" />
        </div>
      </div>

      <div className="flex h-6 items-center">
        <div className="flex h-[23px] items-center bg-[#f0f4fa]">
          <GripV />
          {TOOL_ROW_2.map((t, i) => <Tool key={i} tool={t} />)}
        </div>
        <div className="flex h-[23px] items-center bg-[#f0f4fa] pl-[2px]">
          <GripV />
          <Tool tool="layers" className="h-[22px] w-[28px]" />
          <Combo label="图层" value="COVER_W" className="w-[297px]" pad="pl-[68px]" wide>
            <span className="pointer-events-none absolute inset-y-0 left-[4px] flex items-center gap-[2px]">
              <Icon name="sBulb" className="h-[15px] w-[14px]" />
              <svg className="h-[15px] w-[15px]" viewBox="0 0 16 16" stroke="#f5a83a" strokeWidth="2" fill="#f5a83a">
                <circle cx="8" cy="8" r="3" />
                <path d="M8 0v3M8 13v3M0 8h3M13 8h3M2 2l2 2M12 12l2 2M2 14l2-2M12 4l2-2" />
              </svg>
              <svg className="h-[14px] w-[13px]" viewBox="0 0 14 14" fill="none" stroke="#2f9a3f" strokeWidth="2">
                <path d="M2 6h6v6H2zM8 6V3q2-3 4 0v3" />
              </svg>
              <span className="h-3 w-3 border border-[#700] bg-[#fb0000]" />
            </span>
          </Combo>
          <Tool tool="layerBlue" className="ml-[2px] h-[22px] w-[23px]" />
          <Tool tool="layerGray" />
          <GripV />
          <Combo label="颜色" value="ByLayer" className="ml-[4px] w-[147px]" pad="pl-[18px]">
            <span className="pointer-events-none absolute top-[3px] left-[4px] h-[13px] w-3 border border-[#700] bg-[#fb0000]" />
          </Combo>
          <Sep className="mx-[5px]" />
          <Combo label="线型" value="ByLayer" className="w-[178px]" pad="pl-[80px]">
            <span className="pointer-events-none absolute top-[9px] left-[8px] h-px w-[70px] bg-black" />
          </Combo>
          <Sep className="mx-[5px]" />
          <Combo label="线宽" value="ByLayer" className="w-[148px]" pad="pl-[50px]">
            <span className="pointer-events-none absolute top-[9px] left-[5px] h-px w-[42px] bg-black" />
          </Combo>
          <Sep className="mx-[5px]" />
          <Combo label="打印样式" value="ByColor" className="w-[148px]" pad="pl-[22px]" disabled />
        </div>
        <div className="flex h-[23px] min-w-0 flex-1 items-center overflow-hidden bg-[#f0f4fa] pl-[3px]">
          <GripV />
          {TOOL_PLATES.map((t, i) => <Tool key={i} tool={t} />)}
        </div>
      </div>

      <div className="flex h-6 items-center">
        <div className="flex h-[23px] items-center bg-[#f0f4fa]">
          <GripV />
          {TOOL_ROW_3.map((t, i) => <Tool key={i} tool={t} />)}
        </div>
        <div className="flex h-[23px] items-center bg-[#f0f4fa] pl-[2px]">
          <GripV />
          {TOOL_ROW_3B.map((t, i) => <Tool key={i} tool={t} />)}
        </div>
      </div>
    </div>
  )
}

function ToolColumn({ tools, children }) {
  return (
    <div className="flex w-[22px] flex-col self-start bg-[#f3f6fb]">
      <GripH />
      {tools.map((t, i) => <Tool key={i} tool={t} className="h-[22px] w-[22px]" />)}
      {children}
    </div>
  )
}

function LeftTools() {
  return (
    <aside className="flex shrink-0 gap-[3px] bg-[#dfe8f4] pt-[3px] pr-[3px]">
      <ToolColumn tools={DRAW_TOOLS}>
        <GripH className="my-[2px]" />
        {PIN_TOOLS.map((t, i) => <Tool key={i} tool={t} className="h-[22px] w-[22px]" />)}
      </ToolColumn>
      <ToolColumn tools={DIE_TOOLS} />
      <ToolColumn tools={LAYER_TOOLS} />
    </aside>
  )
}

function RightTools() {
  return (
    <aside className="flex w-6 shrink-0 flex-col bg-[#dfe8f4] pt-px">
      <div className="flex flex-col bg-[#f3f6fb]">
        <GripH />
        {MODIFY_TOOLS.map((t, i) => <Tool key={i} tool={t} />)}
      </div>
    </aside>
  )
}

/* ---------- drawing ---------- */

const TOP = 142
const BOTTOM = 1400
const BANDS = [569, 847]

// a stretch of verticals that opens at each horizontal band
function brokenLines(xs, inset) {
  return xs.map(x => {
    let y = TOP
    let d = ''
    BANDS.forEach(b => {
      d += `M${x}.5 ${y}V${b - inset}`
      y = b + inset
    })
    return `${d}M${x}.5 ${y}V${BOTTOM}`
  }).join('')
}

const fullLines = xs => xs.map(x => `M${x}.5 ${TOP}V${BOTTOM}`).join('')
const partLines = (xs, y1, y2) => xs.map(x => `M${x}.5 ${y1}V${y2}`).join('')
const bandLines = (segs, inset) =>
  BANDS.map(b => segs.map(([a, c]) => `M${a} ${b - inset}.5H${c}M${a} ${b + inset}.5H${c}`).join('')).join('')

const YELLOW_A = [103, 136, 242, 275, 381, 414, 520, 553, 659, 693, 798, 832, 937]
const YELLOW_B = [311, 345, 451, 484, 590]
const YELLOW_C = [623, 729, 762, 868, 901]

function DieHalf() {
  return (
    <g fill="none">
      <g stroke="#f2c53a">
        <path d={partLines(YELLOW_A, TOP, 552)} strokeDasharray="67 32" strokeDashoffset="56" />
        <path d={partLines(YELLOW_A, 586, 830)} strokeDasharray="67 32" strokeDashoffset="10" />
        <path d={partLines(YELLOW_A, 864, BOTTOM)} strokeDasharray="69 32" />
        <path d={partLines(YELLOW_B, TOP, 552)} strokeDasharray="67 32" strokeDashoffset="39" />
        <path d={partLines(YELLOW_B, 586, 830)} strokeDasharray="67 32" strokeDashoffset="10" />
        <path d={partLines(YELLOW_B, 864, BOTTOM)} strokeDasharray="67 32" strokeDashoffset="14" />
        <path d={fullLines(YELLOW_C)} strokeDasharray="67 32" strokeDashoffset="13" />
        <path d={bandLines([[11, 26], [58, 133], [136, 242], [265, 313], [345, 381], [414, 464], [484, 499], [553, 590], [623, 659], [693, 742], [832, 868], [901, 937]], 17)} />
      </g>
      <g stroke="#ee8030">
        <path d={brokenLines([110, 130, 249, 269, 388, 407, 546, 666, 686, 825, 944], 10)} />
        <path d={brokenLines([527, 805], 17)} />
        <path d={fullLines([464, 499, 742, 777])} />
        <path d={bandLines([[16, 110], [130, 249], [269, 388], [407, 464], [546, 666], [686, 742], [825, 944]], 10)} />
        <path d={bandLines([[499, 527], [777, 805]], 17)} />
      </g>
      <g stroke="#dc20e0">
        <path d={brokenLines([318, 338, 477, 597], 10)} />
        <path d={fullLines([457, 616, 736, 755, 875, 894])} />
        <path d={bandLines([[120, 130], [249, 269], [388, 407], [477, 546]], 10)} />
        <path d="M114 552q6 1 6 7M114 586q6-1 6-7M114 830q6 1 6 7M114 864q6-1 6-7" />
      </g>
      <g stroke="#f01414">
        <path d={fullLines([120, 259, 398, 481, 537, 676, 759, 815, 954])} strokeDasharray="105 17 18 17" strokeDashoffset="113" />
        <path d={fullLines([328, 467, 606, 745, 884])} strokeDasharray="105 17 18 17" strokeDashoffset="39" />
      </g>
      <path d="M527 145.5h20M529 147l8 5 8-5" stroke="#f2c53a" />
      {[151, 686].map(x => (
        <g key={x}>
          <circle cx={x + 0.5} cy="221.5" r="8" stroke="#f07818" />
          <path d={`M${x - 8} 221.5h17M${x}.5 213v17`} stroke="#f01414" />
        </g>
      ))}
      {[470, 492, 748, 770].map(x => (
        <circle key={x} cx={x} cy="229" r="2.5" fill="#e01018" stroke="#f07818" />
      ))}
      {[433, 572, 711, 850].map(x =>
        [249, 291, 332, 374, 409].map(y => (
          <g key={`${x}-${y}`}>
            <circle cx={x} cy={y + 0.5} r="14" stroke="#d88038" />
            <path d={`M${x - 20} ${y}.5h41M${x}.5 ${y - 21}v42`} stroke="#f01414" />
          </g>
        ))
      )}
    </g>
  )
}

function Drawing() {
  const steps = Array.from({ length: 60 }, (_, i) => i)
  return (
    <svg className="absolute inset-0 h-full w-full" shapeRendering="crispEdges">
      <g transform="translate(-88 -142)">
        {steps.map(i => {
          const x = Math.round(14 + i * 34.8)
          const y = Math.round(144.5 + i * 34.8)
          return (
            <path
              key={i}
              d={`M${x}.5 142V${BOTTOM}M88 ${y}.5H2400`}
              stroke={i % 5 === 0 ? '#1b2022' : '#15191a'}
            />
          )
        })}
        <path d="M88 179.5H2400M88 353.5H2400M88 527.5H2400M88 874.5H2400" stroke="#2d3133" />
        <DieHalf />
        <g transform="translate(1909 0) scale(-1 1)">
          <DieHalf />
        </g>
        <g fill="none" stroke="#f01414">
          <path d="M88 569.5H1834M1842 569.5H1898M88 847.5H693M711 847.5h18M745 847.5h106M868 847.5h17M901 847.5h106M1014 847.5H1898" />
          <path d="M88 708.5H203M1280 708.5H1898" strokeDasharray="115 6 12 6" />
        </g>
        <g fill="none" stroke="#dc20e0">
          <path d="M1823.5 142V1400M1823 519q5 8 16 8h12.500v7.500h42V882h-42v7h-12.500q-11 0-16 8" />
          <circle cx="1426" cy="708.5" r="17" />
        </g>
        <g fill="none" stroke="#fff">
          <path d="M114.500 984.500h14v14h-14zM121.500 991V902M121 991.500H211" />
          <path d="M121 870l10 9 10-9M131.500 879v10M223 972l20 20M243 972l-20 20" />
        </g>
      </g>
    </svg>
  )
}

/* ---------- settings dialog ---------- */

const PARTS = [
  ['冲头', '(Punch) :', '冲头', '60.00', 'SKD11', 'HRC58%%D~60%%D', '', ''],
  ['上夹入子', '(PH_P) :', '夹板入子', '20.00', '45#', 'HRC30%%D-调质', '0.01W', '0.01W'],
  ['上模入子', '(DIE2_P) :', '上模入子', '25.00', 'Cr12', 'HRC50%%D~52%%D', '0.01W', '0.01W'],
  ['下模入子', '(DIE_P)', '下模入子', '25.00', 'SKD11', 'HRC58%%D~60%%D', '0.01W', '0.01W'],
  ['上脱入子', '(PS_P)', '上脱入子', '20.00', 'SKD11', 'HRC58%%D~60%%D', '0.01W', '0.01W'],
  ['下脱入子', '(PS2_P)', '下脱入子', '20.00', 'SKD11', 'HRC58%%D~60%%D', '0.01W', '0.01W'],
  ['下夹入子', '(PH2_P)', '下夹入子', '20.00', '45#', 'HRC30%%D-调质', '0.01W', '0.01W'],
  ['下垫入子', '(LB_P)', '下垫入子', '20.00', '45#', 'HRC30%%D-调质', '0.01W', '0.01W'],
]

const PLATES = [
  ['夹板', '(PH)', true, '0.01W'],
  ['止挡板', '(PPS)', true, '0.5WW'],
  ['脱料板', '(PS)', true, '0.01W'],
  ['下模板', '(DIE)', true, '0.05W'],
  ['下脱板', '(PS2)', false, ''],
  ['下夹板', '(PH2)', false, ''],
  ['下止挡板', 'PPS2', false, ''],
  ['下垫板', '(LB)', true, '1E'],
  ['下背板', '(LB2)', false, ''],
  ['下模座', '(LP)', true, '2E'],
]

const OFFSETS = [
  ['夹板颜色:', '刀口颜色:', 'text-[#ff0]', '冲头过孔:', '0'],
  ['脱料板颜色:', '背垫入子过孔', 'text-white', '垫片过孔:', '1'],
  ['下模板颜色:', '背垫入子过孔', 'text-white', '垫片过孔:', '0'],
]

const BORDERS = {
  plain: 'h-[18px] border border-[#d8d8d8]',
  yellow: 'h-[21px] border-2 border-[#f2ee10]',
  cyan: 'h-[20px] border-2 border-[#20b8e0]',
}

function Btn({ children = '', className = '', kind = 'plain', label }) {
  return (
    <button
      aria-label={children === '' ? label : undefined}
      className={`flex items-center justify-center overflow-hidden whitespace-nowrap rounded-[2px] bg-linear-to-b from-[#f4f4f4] from-45% to-[#cfcfcf] to-55% font-bold leading-none text-black ${BORDERS[kind]} ${hasCjk(children) ? 'text-[15px]' : 'text-[14px]'} ${className}`}
    >
      {children}
    </button>
  )
}

function Label({ name, code = '', className = 'text-white' }) {
  return (
    <span className={`whitespace-nowrap pb-[5px] text-[14px] leading-none ${className}`}>
      <b className="text-[15px]">{name}</b>{code}
    </span>
  )
}

function PlateRow({ name, code, checked, value }) {
  const [on, setOn] = useState(checked)
  return (
    <div className="grid h-8 grid-cols-[26px_94px_63px] items-center">
      <label className="relative flex h-[21px] w-[18px] items-center bg-[#ff0] pl-px" htmlFor={`plate-${name}`}>
        <input
          id={`plate-${name}`}
          type="checkbox"
          aria-label={name}
          checked={on}
          onChange={e => setOn(e.target.checked)}
          className="h-[13px] w-[13px] appearance-none border border-[#8a8a8a] bg-[#f2f2f2] shadow-[inset_0_0_0_1px_#fff]"
        />
        {on && (
          <svg className="pointer-events-none absolute top-[5px] left-[3px] h-[10px] w-[10px]" viewBox="0 0 10 10" fill="none" stroke="#35459a" strokeWidth="2">
            <path d="M1 5l3 3 5-7" />
          </svg>
        )}
      </label>
      <Label name={name} code={code} />
      <Btn kind="yellow" label={`${name}间隙`}>{value}</Btn>
    </div>
  )
}

function Dialog() {
  return (
    <section className="absolute top-[118px] left-[115px] w-[1078px] rounded-[6px] border border-[#c8ccd0] bg-[linear-gradient(180deg,#9a9c9e_0,#8b8d90_120px,#c4c8cb_143px,#0e1118_144px,#0e1118_100%)] px-[5px] pb-[5px] font-['Liberation_Sans','Noto_Sans_CJK_SC',sans-serif]">
      <div className="-mx-[5px] flex h-7 items-start justify-between rounded-t-[5px] bg-[linear-gradient(90deg,#8b8d8f_0,#a6a8a9_100px,#8b8d8f_205px,#15181e_240px,#12141c_600px,#0f1218_820px,#55585c_960px,#8a8c8e_1076px)] pr-[5px] pl-[9px]">
        <h2 className="self-center whitespace-pre font-['Noto_Sans','Noto_Sans_CJK_SC',sans-serif] text-[12px] text-black">
          ** PressCAD  零件材质 / 热处理 设定 **
        </h2>
        <button aria-label="关闭" className="flex h-[19px] w-12 items-center justify-center rounded-b-[4px] border border-t-0 border-[#e8b8b0] bg-linear-to-b from-[#d08478] from-45% to-[#a81e0c] to-55%">
          <svg className="h-[9px] w-[10px]" viewBox="0 0 10 9" stroke="#fff" strokeWidth="3"><path d="M1 1l8 7M9 1L1 8" /></svg>
        </button>
      </div>

      <div className="border border-[#d0d4d0] bg-[#00c000] pl-[17px] pb-[7px]">
        <div className="grid grid-cols-[143px_168px_81px_96px_87px_89px_71px_81px_110px_auto] pt-[23px] pb-[3px] text-[15px] font-bold leading-4 whitespace-nowrap text-white">
          <span />
          <span>零件名</span><span>厚度</span><span>材 质</span><span>热处理</span><span>入子外形</span>
          <span>内孔间隙</span><span>模孔间隙</span><span>冲头外形过孔</span><span>间隙</span>
        </div>

        <div className="flex gap-1">
          <div className="w-[811px] shrink-0">
            {PARTS.map(([name, code, part, thick, material, heat, inner, mod]) => (
              <div key={name + code} className="grid h-8 grid-cols-[129px_77px_19px_77px_3px_50px_5px_105px_8px_104px_8px_77px_3px_77px_3px_59px] items-center">
                <Label name={name} code={code} />
                <Btn>{part}</Btn><i />
                <Btn>选图元</Btn><i />
                <Btn>{thick}</Btn><i />
                <Btn>{material}</Btn><i />
                <Btn>{heat}</Btn><i />
                <Btn>W</Btn><i />
                <Btn label={`${name}内孔间隙`}>{inner}</Btn><i />
                <Btn label={`${name}模孔间隙`}>{mod}</Btn>
              </div>
            ))}

            <div className="grid h-8 grid-cols-[129px_105px_125px_98px_42px_166px_86px] items-center">
              <i /><Btn>更多模板设定</Btn><i />
              <Label name="入子配角间隙" className="text-[#ff0]" />
              <Btn>0.30</Btn><i />
              <Btn>读图元板厚</Btn>
            </div>

            <div className="grid h-8 grid-cols-[96px_33px_2px_138px_12px_50px_44px_82px_86px_17px_88px_34px_6px_79px_44px] items-center">
              <Label name="*** 零件编号" code=" :" />
              <Btn>1</Btn><i />
              <Btn>材质/热处理设定</Btn><i />
              <Btn>入中入</Btn><i />
              <Label name="冲头类型" className="text-[#ff0]" />
              <Btn>冲孔下料</Btn><i />
              <Label name="排屑孔形式:" />
              <Btn kind="cyan">圆孔</Btn><i />
              <Label name="方孔圆角值:" />
              <Btn kind="cyan">0.00</Btn>
            </div>

            {OFFSETS.map(([color, edge, tone, hole, last], i) => (
              <div key={color} className="grid h-8 grid-cols-[96px_279px_81px_89px_32px_7px_65px_32px_6px_82px_32px] items-center">
                {i === 0 ? <Label name="[注解说明]:" /> : <i />}
                {i === 0 && <div className="flex gap-[10px]"><Btn className="w-[159px]">入块</Btn><Btn className="w-6">..</Btn></div>}
                {i === 1 && <div className="flex gap-[11px]"><Btn className="w-[69px]">层复制</Btn><Btn className="w-[69px]">+标签</Btn></div>}
                {i === 2 && <div className="flex gap-[8px]"><Btn className="w-[168px]">依图层+标签</Btn><Btn className="w-[78px]">图层设定</Btn></div>}
                <Label name={color} className="text-[#ff0]" />
                <Label name={edge} className={tone} />
                <Btn>0</Btn><i />
                <Label name={hole} />
                <Btn>0</Btn><i />
                <Label name="模板入仁孔:" />
                <Btn>{last}</Btn>
              </div>
            ))}
          </div>

          <div>
            {PLATES.map(([name, code, checked, value]) => (
              <PlateRow key={name} name={name} code={code} checked={checked} value={value} />
            ))}
            <div className="flex h-8 items-center"><Btn className="ml-px w-[169px]">无标签依图层+标签</Btn></div>
            <div className="flex h-8 items-center gap-2">
              <Btn kind="yellow" className="w-20">确认</Btn><Btn kind="yellow" className="w-20">存规划檔</Btn>
            </div>
            <div className="flex h-8 items-center gap-2">
              <Btn kind="yellow" className="w-20">放弃</Btn><Btn kind="yellow" className="w-20">读规划檔</Btn>
            </div>
          </div>
        </div>
      </div>
    </section>
  )
}

/* ---------- document area ---------- */

function DocumentArea() {
  return (
    <main className="flex min-w-0 flex-1 flex-col bg-[#f0f0f0]">
      <div className="flex h-[22px] shrink-0 items-center border-l border-[#a9b4c2] bg-[#f6f6f7] pl-1">
        <svg className="h-[9px] w-[6px]" viewBox="0 0 6 9" fill="#fff" stroke="#111"><path d="M5 1v7L1 4.500z" /></svg>
        <div className="relative ml-[6px] flex h-[18px] items-center pl-[10px] pr-[2px]">
          <svg className="absolute inset-0 h-full w-full" viewBox="0 0 116 18" preserveAspectRatio="none">
            <path d="M0 18L7 3q2-3 5-3h100q4 0 4 4v14z" fill="#ffe48a" stroke="#c8b070" />
          </svg>
          <span className="relative font-['Noto_Sans',sans-serif] text-[12px] font-medium leading-none text-black">Drawing1.dwg</span>
          <button aria-label="关闭图形" className="relative ml-[6px] flex h-[13px] w-[13px] items-center justify-center border-2 border-[#8a4a48] bg-[#f0d8d0]">
            <svg className="h-[7px] w-[7px]" viewBox="0 0 7 7" stroke="#a01818" strokeWidth="2"><path d="M1 1l5 5M6 1L1 6" /></svg>
          </button>
        </div>
        <svg className="mr-[12px] ml-auto h-[9px] w-[6px]" viewBox="0 0 6 9" fill="#fff" stroke="#111"><path d="M1 1v7l4-3.500z" /></svg>
      </div>

      <div className="relative min-h-0 flex-1 border-t-[3px] border-r-[6px] border-b-2 border-l-[5px] border-t-[#8e8e8e] border-r-[#eef1f5] border-b-white border-l-[#a3a7ab] bg-black">
        <div className="absolute inset-0 overflow-hidden">
          <Drawing />
        </div>
        <Dialog />
      </div>

      <div className="flex h-6 shrink-0 items-start border-t border-b border-l-2 border-t-[#555] border-b-[#a9b4c2] border-l-[#dfe8f4] bg-[#efeff0] font-['Noto_Sans','Noto_Sans_CJK_SC',sans-serif] text-[12px]">
        {['M1 1v8M8 1v8L3 5z', 'M7 1v8L3 5z', 'M3 1v8l4-4z', 'M9 1v8M2 1v8l5-4z'].map(d => (
          <button key={d} aria-label="滚动标签" className="flex h-4 w-[18px] items-center justify-center">
            <svg className="h-[9px] w-[10px]" viewBox="0 0 10 10" stroke="#000" fill="#000"><path d={d} /></svg>
          </button>
        ))}
        <span className="w-1" />
        {[['模型', 'w-[48px]', true], ['布局1', 'w-[47px]'], ['布局2', 'w-[47px]'], ['+', 'w-[25px]']].map(([name, width, active]) => (
          <button key={name} className={`relative -mr-[3px] h-4 leading-[15px] ${width} ${active ? 'font-bold text-white' : 'text-black'}`}>
            <svg className="absolute inset-0 h-full w-full" viewBox="0 0 48 16" preserveAspectRatio="none">
              <path
                d={active ? 'M0 0h48l-6 16H7z' : 'M47 0l-6 15H4L0 2'}
                fill={active ? '#000' : '#fff'}
                stroke="#000"
                vectorEffect="non-scaling-stroke"
              />
            </svg>
            <span className="relative">{name}</span>
          </button>
        ))}
      </div>
      <div className="h-px shrink-0 bg-[#dfe8f4]" />
    </main>
  )
}

/* ---------- bottom bars ---------- */

function BottomTools() {
  return (
    <div className="flex h-[27px] shrink-0 items-start border-b-2 border-[#6a6a78] bg-[#dbe6f4]">
      <div className="flex h-[23px] items-center bg-[#f3f6fb] pr-[3px]">
        <GripV />
        <Tool tool="slab" /><Tool tool="slabP" /><Tool tool="boxLine" /><Tool tool="target" />
        <Sep />
        <Tool tool="leaf" /><Tool tool={['改', K]} /><Tool tool={['刪', K]} /><Tool tool={['汇', K]} />
        <Sep className="mx-[4px]" />
        <Tool tool={['設', K]} /><Tool tool={['前', K]} />
        <Tool tool="elbow" /><Tool tool="nest" /><Tool tool="nest1" /><Tool tool={['NC', K, GR]} />
      </div>
    </div>
  )
}

function CommandLine() {
  return (
    <div className="flex h-[59px] shrink-0 bg-[#c9d6e6] font-['Noto_Sans','Noto_Sans_CJK_SC',sans-serif] text-[12px]">
      <div className="flex w-[19px] flex-col items-center gap-[10px] pt-[3px]">
        <button aria-label="关闭命令行" className="flex h-[13px] w-[13px] items-center justify-center border-2 border-[#a04a48] bg-[#f0d8d0]">
          <svg className="h-[7px] w-[7px]" viewBox="0 0 7 7" stroke="#a01818" strokeWidth="2"><path d="M1 1l5 5M6 1L1 6" /></svg>
        </button>
        <svg className="h-[9px] w-2" viewBox="0 0 8 9" stroke="#111" fill="none"><path d="M1 5h6M2 5V1h4v4M4 5v4" /></svg>
      </div>
      <div className="flex min-w-0 flex-1 flex-col border-l border-[#666]">
        <div className="flex h-[39px] border-b-2 border-[#666] bg-white">
          <div className="flex-1 pt-px pl-[3px] leading-[18px] text-[#222]">
            <p>"BOM"</p>
            <p className="font-['Liberation_Mono','Noto_Sans_CJK_SC',monospace]">命令:SAA</p>
          </div>
          <div className="mr-[3px] flex w-[15px] flex-col items-center justify-between bg-[#f0f0f0] py-2">
            <span className="h-0 w-0 border-x-[3px] border-b-4 border-x-transparent border-b-[#333]" />
            <span className="h-0 w-0 border-x-[3px] border-t-4 border-x-transparent border-t-[#333]" />
          </div>
        </div>
        <div className="flex h-5 bg-white">
          <input aria-label="命令" className="min-w-0 flex-1 px-[3px] outline-none" />
          <div className="mr-[19px] flex h-[17px] w-20 items-center bg-[#efefef] px-[6px]">
            <span className="h-0 w-0 border-y-[3px] border-r-4 border-y-transparent border-r-[#222]" />
            <span className="ml-[9px] h-4 w-[14px] rounded-[1px] border border-[#8c8c8c] bg-linear-to-r from-[#f4f4f4] to-[#ccc]" />
            <span className="ml-auto h-0 w-0 border-y-[3px] border-l-4 border-y-transparent border-l-[#222]" />
          </div>
        </div>
      </div>
    </div>
  )
}

const STATUS_TOOLS = [
  ['sGrid'], ['sGrid2', 1], ['sOrtho'], ['sPolar', 1], ['sSnap', 1], ['sTrack', 1], ['sUcs'], ['sDyn', 1], ['sLw'],
  ['sSel'], ['sLay'], ['sZoom'], ['sWin', 1], ['sAnn'],
]

function StatusTool({ name, active }) {
  return (
    <button
      aria-label={name}
      className={`flex h-[18px] w-[20px] shrink-0 items-center justify-center rounded-[2px] border ${active ? 'border-[#e8b030] bg-linear-to-b from-[#fdf3d0] to-[#fbd878]' : 'border-transparent'}`}
    >
      <Icon name={name} className="h-[14px] w-[14px]" />
    </button>
  )
}

function StatusBar() {
  return (
    <footer className="flex h-6 shrink-0 items-center border-t-2 border-[#999] bg-[#efebeb] pl-[3px] font-['Noto_Sans','Noto_Sans_CJK_SC',sans-serif] text-[11px] text-[#111]">
      <span className="w-[346px] whitespace-pre">*** Win-Win ***  855.8413, 3693.4936, 0</span>
      <div className="flex items-center gap-[2px]">
        {STATUS_TOOLS.map(([name, active]) => <StatusTool key={name} name={name} active={active} />)}
        <button className="mr-[2px] flex items-center gap-1 text-[11px]">1:1<Caret /></button>
        <StatusTool name="sAnn" /><StatusTool name="sAnn" /><StatusTool name="sHatch" active />
        <StatusTool name="sTable" /><StatusTool name="sCycle" active />
      </div>
      <div className="ml-auto flex items-center gap-[2px] pr-[3px]">
        {['gear', 'sLock', 'sBulb', 'sChip', 'sFull'].map(n => <StatusTool key={n} name={n} />)}
        <span className="text-[11px]">GstarCAD</span>
      </div>
    </footer>
  )
}

function Taskbar() {
  const apps = ['bg-[#c8b060]', 'bg-[#58b858]', 'bg-[#d03a30]', 'bg-[#f06a10]', 'bg-[#f09040]', 'bg-[#78c890]', 'bg-[#2080d0]', 'bg-[#20a8d0]', 'bg-[#10a8f0]', 'bg-[#ffffff]']
  return (
    <div className="flex h-2 shrink-0 overflow-hidden bg-linear-to-b from-[#4a565e] to-[#080c10]">
      <div className="flex w-[308px] shrink-0 gap-[30px] pt-[3px] pl-3">
        <span className="h-4 w-8 rounded-t-full bg-[#9ab4c8]" />
        <span className="ml-3 h-4 w-4 rounded-t-full bg-[#2a60b8]" />
        <span className="h-4 w-[30px] rounded-t bg-[#d81818]" />
        <span className="ml-1 h-4 w-6 bg-[#78b8d0]" />
      </div>
      {apps.map(color => (
        <span key={color} className="mr-1 flex h-4 w-[58px] shrink-0 justify-center rounded-t border border-[#a0a8ac] bg-linear-to-r from-[#8a9094] to-[#3a4044] pt-[2px]">
          <span className={`h-4 w-6 rounded-t-full ${color}`} />
        </span>
      ))}
      <span className="ml-auto mr-[9px] pt-[4px] text-[11px] leading-none text-white">10:37</span>
      <span className="h-full w-4 border-l border-[#8a9094] bg-[#5a6266]" />
    </div>
  )
}

function LevelMeter() {
  return (
    <div className="absolute right-0 bottom-[144px] flex h-[58px] w-[10px] flex-col justify-end gap-px rounded-l bg-[#454f5e] py-[7px] pl-[4px]">
      {Array.from({ length: 20 }, (_, i) => (
        <span key={i} className={`h-px w-[4px] ${i < 8 ? 'bg-[#1c242c]' : i < 14 ? 'bg-[#d8d860]' : 'bg-[#48d0b8]'}`} />
      ))}
    </div>
  )
}

function Watermark() {
  return (
    <div className="pointer-events-none absolute inset-0 z-20 grid auto-rows-[200px] grid-cols-[repeat(10,200px)] overflow-hidden pt-px" aria-hidden="true">
      {Array.from({ length: 60 }, (_, i) => (
        <div key={i} className="relative flex items-center justify-center">
          <svg className="absolute inset-0 h-full w-full" viewBox="0 0 200 200" stroke="#000" strokeOpacity="0.5" strokeDasharray="2 1" strokeWidth="0.7">
            <path d="M0 0l85 85M200 0l-85 85M0 200l85-85M200 200l-85-85" />
          </svg>
          <span className="text-[23px] leading-none text-black/50">爱柏科技</span>
        </div>
      ))}
    </div>
  )
}

export default function App() {
  return (
    <div className="relative flex h-screen flex-col overflow-hidden bg-black pl-2 font-['Liberation_Sans','Noto_Sans_CJK_SC',sans-serif]">
      <TitleBar />
      <Logo />
      <MenuBar />
      <Toolbars />
      <div className="flex min-h-0 flex-1">
        <LeftTools />
        <DocumentArea />
        <RightTools />
      </div>
      <BottomTools />
      <CommandLine />
      <StatusBar />
      <Taskbar />
      <LevelMeter />
      <Watermark />
    </div>
  )
}
